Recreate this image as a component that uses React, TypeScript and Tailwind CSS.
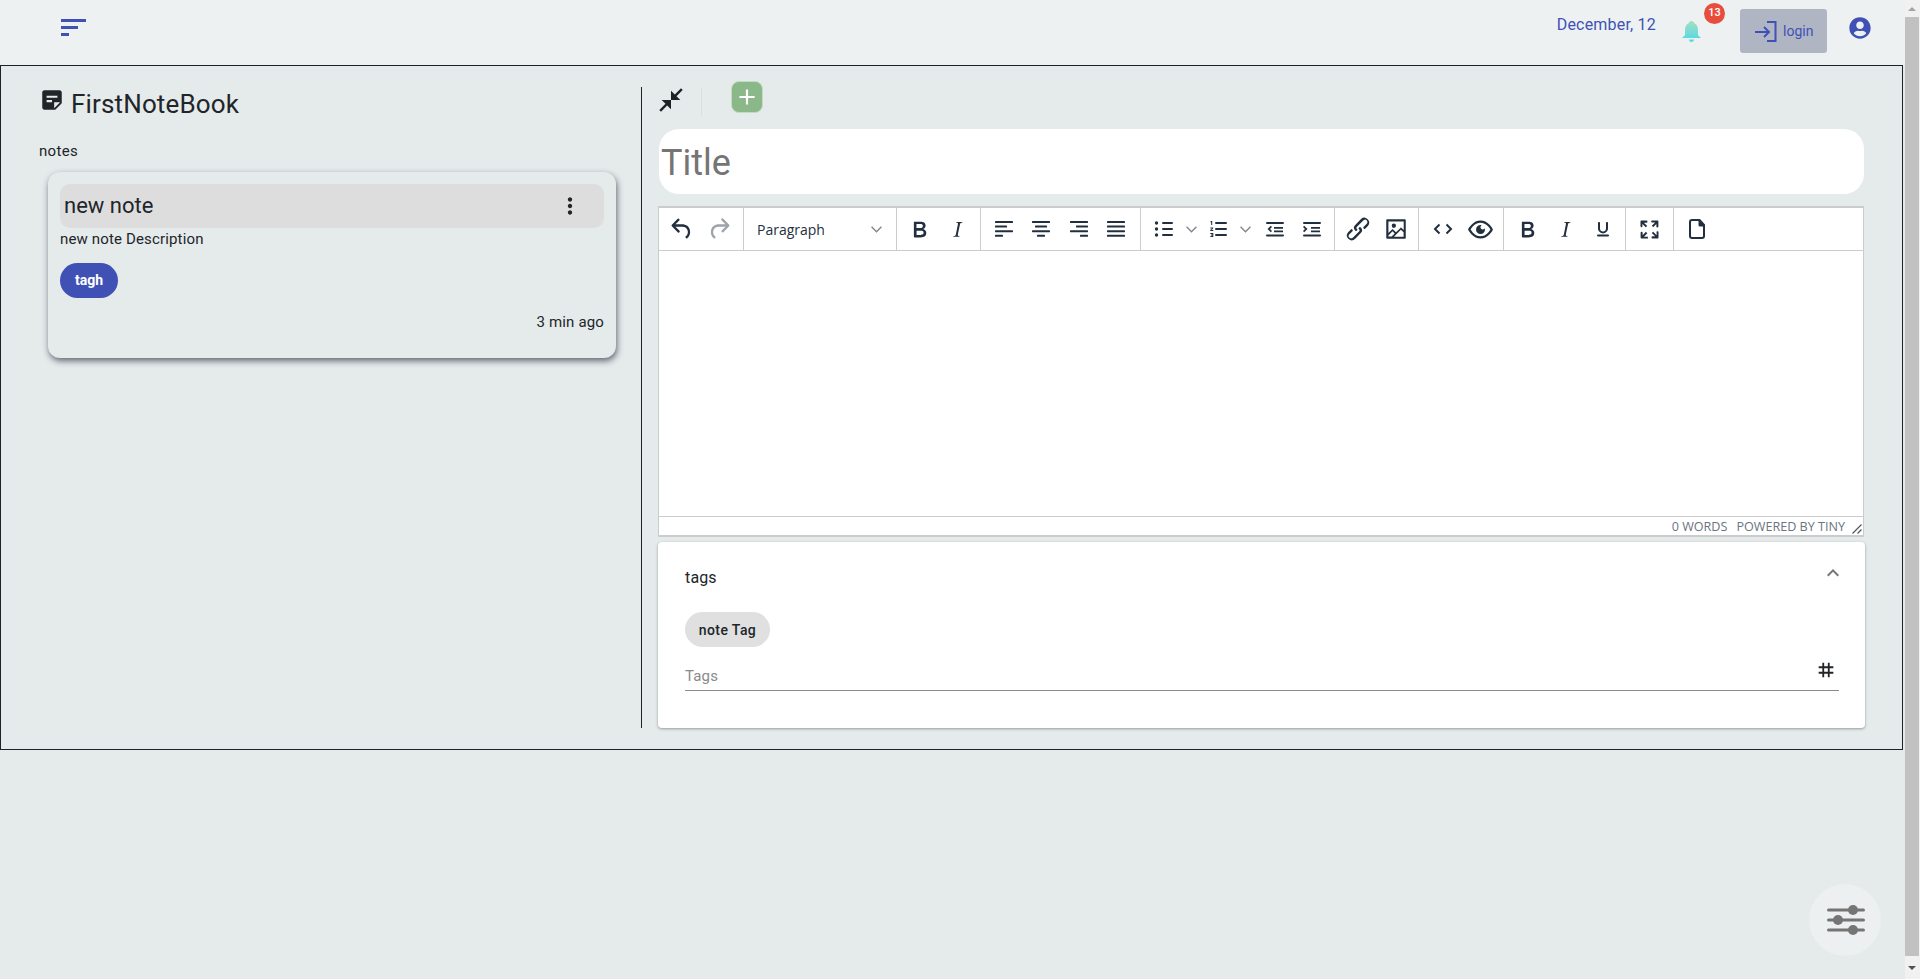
import React from "react";
import { MdStickyNote2, MdMoreVert, MdCloseFullscreen, MdTag, MdExpandLess, MdOutlineAdd } from "react-icons/md";
import { FaUserCircle } from "react-icons/fa";

const P = (d: string) => <path d={d} fillRule="nonzero" />;
const lines = (rows: [number, number][]) => (
  <>
    {rows.map(([x, w], i) => (
      <rect key={i} x={x} y={4 + i * 4.6} width={w} height="2" rx="0.6" />
    ))}
  </>
);

const icons = {
  undo: P("M6.4 8H12c3.7 0 6.2 2 6.8 5.1.6 2.7-.4 5.6-2.3 6.8a1 1 0 0 1-1-1.8c1.1-.6 1.8-2.7 1.4-4.6-.5-2.1-2.1-3.5-4.9-3.5H6.4l3.3 3.3a1 1 0 1 1-1.4 1.4l-5-5a1 1 0 0 1 0-1.4l5-5a1 1 0 0 1 1.4 1.4L6.4 8Z"),
  redo: P("M17.6 10H12c-2.8 0-4.4 1.4-4.9 3.5-.4 2 .3 4 1.4 4.6a1 1 0 1 1-1 1.8c-2-1.2-2.9-4.1-2.3-6.8.6-3 3-5.1 6.8-5.1h5.6l-3.3-3.3a1 1 0 1 1 1.4-1.4l5 5a1 1 0 0 1 0 1.4l-5 5a1 1 0 0 1-1.4-1.4l3.3-3.3Z"),
  bold: P("M7.8 19c-.3 0-.5 0-.6-.2l-.2-.5V5.7c0-.2 0-.4.2-.5l.6-.2h5c1.5 0 2.7.3 3.5 1 .7.6 1.1 1.4 1.1 2.5a3 3 0 0 1-.6 1.9c-.4.6-1 1-1.6 1.2.4.1.9.3 1.3.6s.8.7 1 1.2c.4.4.5 1 .5 1.6 0 1.3-.4 2.3-1.3 3-.8.7-2.1 1-3.8 1H7.8Zm5-8.3c.6 0 1.2-.1 1.6-.5.4-.3.6-.7.6-1.3 0-1.1-.8-1.7-2.3-1.7H9.3v3.5h3.4Zm.5 6c.7 0 1.3-.1 1.7-.4.4-.4.6-.9.6-1.5s-.2-1-.7-1.4c-.4-.3-1-.4-2-.4H9.4v3.8h4Z"),
  italic: P("m16.7 4.7-.1.9h-.3c-.6 0-1 0-1.4.3-.3.3-.4.6-.5 1.1l-2.1 9.8v.6c0 .5.4.8 1.4.8h.2l-.2.8H8l.2-.8h.2c1.1 0 1.8-.5 2-1.5l2-9.8.1-.5c0-.6-.4-.8-1.4-.8h-.3l.2-.9h5.800Z"),
  underline: P("M16 5c.6 0 1 .4 1 1v5.5a4 4 0 0 1-.4 1.8l-.5 1a5 5 0 0 1-8.2 0l-.5-1a4 4 0 0 1-.4-1.8V6c0-.6.4-1 1-1s1 .4 1 1v5.5c0 1.7 1.3 3 3 3s3-1.3 3-3V6c0-.6.4-1 1-1ZM7 17.5h10a1 1 0 0 1 0 2H7a1 1 0 0 1 0-2Z"),
  left: lines([[3, 18], [3, 12], [3, 18], [3, 8]]),
  center: lines([[3, 18], [6, 12], [3, 18], [8, 8]]),
  right: lines([[3, 18], [9, 12], [3, 18], [13, 8]]),
  justify: lines([[3, 18], [3, 18], [3, 18], [3, 18]]),
  bullet: (
    <>
      <path d="M11 5h9a1 1 0 0 1 0 2h-9a1 1 0 0 1 0-2Zm0 6h9a1 1 0 0 1 0 2h-9a1 1 0 0 1 0-2Zm0 6h9a1 1 0 0 1 0 2h-9a1 1 0 0 1 0-2Z" />
      <circle cx="4.500" cy="6" r="1.700" />
      <circle cx="4.500" cy="12" r="1.700" />
      <circle cx="4.500" cy="18" r="1.700" />
    </>
  ),
  number: (
    <>
      <path d="M10 5h10a1 1 0 0 1 0 2H10a1 1 0 0 1 0-2Zm0 6h10a1 1 0 0 1 0 2H10a1 1 0 0 1 0-2Zm0 6h10a1 1 0 0 1 0 2H10a1 1 0 0 1 0-2Z" />
      <path d="M5.2 4h1v4h-1V5.2H4.400V4.600ZM4.300 10.500h2.900v1.000L5.500 13h1.800v1H4.300v-1l1.800-1.600H4.300ZM4.300 16h3v4h-3v-.9h2v-.7H5v-.8h1.300v-.7h-2Z" />
    </>
  ),
  outdent: P("M7.800 8.700 4.500 12l3.300 3.300 1.200-1.200L7 12l2-2.100ZM11 10h9v1.800h-9Zm0 3.400h9v1.800h-9ZM4 5h16a1 1 0 0 1 0 2H4a1 1 0 1 1 0-2Zm0 12.500h16a1 1 0 0 1 0 2H4a1 1 0 0 1 0-2Z"),
  indent: P("m4.200 8.700 3.300 3.300-3.300 3.300L3 14.100 5 12 3 9.900ZM11 10h9v1.800h-9Zm0 3.400h9v1.800h-9ZM4 5h16a1 1 0 0 1 0 2H4a1 1 0 1 1 0-2Zm0 12.500h16a1 1 0 0 1 0 2H4a1 1 0 0 1 0-2Z"),
  link: P("M6.200 12.300a1 1 0 0 1 1.400 1.400l-2 2a2 2 0 1 0 2.600 2.800l4.800-4.800a1 1 0 0 0 0-1.400 1 1 0 1 1 1.400-1.300 2.900 2.900 0 0 1 0 4L9.600 20a3.900 3.900 0 0 1-5.500-5.500l2-2Zm11.600-.6a1 1 0 0 1-1.400-1.400l2-2a2 2 0 1 0-2.600-2.800L11 10.300a1 1 0 0 0 0 1.400A1 1 0 1 1 9.600 13a2.900 2.900 0 0 1 0-4L14.400 4a3.900 3.900 0 0 1 5.500 5.500l-2 2Z"),
  image: P("m5 15.700 3.300-3.200c.3-.3.7-.3 1 0L12 15l4.100-4c.3-.4.8-.4 1 0l2 1.900V5H5v10.700ZM5 18v1h3l2.800-2.900-2-2L5 17.900Zm14-3-2.500-2.400-6.400 6.500H19v-4ZM4 3h16c.6 0 1 .4 1 1v16c0 .6-.4 1-1 1H4a1 1 0 0 1-1-1V4c0-.6.4-1 1-1Zm6 8a2 2 0 1 0 0-4 2 2 0 0 0 0 4Z"),
  code: <path d="M8.500 7.500 4 12l4.500 4.500M15.500 7.500 20 12l-4.500 4.500" fill="none" stroke="#222f3e" strokeWidth="2" />,
  eye: P("M3.500 12.500c.5.800 1.100 1.600 1.800 2.300 2 2 4.200 3.200 6.700 3.200s4.700-1.200 6.700-3.200a16.200 16.200 0 0 0 2.100-2.800 15.700 15.700 0 0 0-2.100-2.800c-2-2-4.200-3.200-6.700-3.200a9.300 9.300 0 0 0-6.700 3.200A16.200 16.200 0 0 0 3.200 12c0 .2.200.3.300.5Zm-2.400-1 .7-1.200L4 7.800C6.200 5.400 8.900 4 12 4c3 0 5.800 1.400 8.100 3.800a18.200 18.200 0 0 1 2.800 3.700v1l-.7 1.200-2.100 2.500c-2.300 2.400-5 3.800-8.100 3.800-3 0-5.800-1.400-8.100-3.800a18.200 18.200 0 0 1-2.800-3.700 1 1 0 0 1 0-1Zm12-3.300a2 2 0 1 0 2.700 2.600 4 4 0 1 1-2.700-2.600Z"),
  full: P("m15.300 10-1.200-1.300 2.900-3h-2.300a.9.900 0 1 1 0-1.700H19c.5 0 .9.400.9.900v4.400a.9.900 0 1 1-1.800 0V7l-2.900 3Zm0 4 3 3v-2.300a.9.900 0 1 1 1.700 0V19c0 .5-.4.900-.9.900h-4.400a.9.900 0 1 1 0-1.800H17l-3-2.900 1.300-1.200ZM10 15.400l-2.900 3h2.300a.9.900 0 1 1 0 1.700H5a.9.900 0 0 1-.9-.9v-4.400a.9.900 0 1 1 1.800 0V17l2.900-3 1.200 1.300ZM8.700 10 5.700 7v2.300a.9.900 0 0 1-1.700 0V5c0-.5.400-.9.900-.9h4.400a.9.900 0 0 1 0 1.800H7l3 2.900L8.700 10Z"),
  doc: P("M7 4a1 1 0 0 0-1 1v14a1 1 0 0 0 1 1h10a1 1 0 0 0 1-1V9.500h-3a1.500 1.500 0 0 1-1.500-1.500V4H7ZM7 2h8l5 5.500V19a3 3 0 0 1-3 3H7a3 3 0 0 1-3-3V5a3 3 0 0 1 3-3Z"),
};

const Btn = ({ i, muted, w = "w-[37.500px]", size = 24 }: { i: keyof typeof icons; muted?: boolean; w?: string; size?: number }) => (
  <div className={`${w} flex items-center justify-center shrink-0`}>
    <svg viewBox="0 0 24 24" width={size} height={size} className="shrink-0" fill={muted ? "#9ea3a9" : "#222f3e"}>
      {icons[i]}
    </svg>
  </div>
);

const Chev = () => (
  <svg viewBox="0 0 10 6" width="11" height="7" fill="none" stroke="#7e858c" strokeWidth="1.200" className="shrink-0">
    <path d="M0.500 0.500 5 5l4.500-4.500" />
  </svg>
);

const Group = ({ children, w }: { children: React.ReactNode; w: string }) => (
  <div className={`${w} h-full flex items-center border-r border-[#cccccc] shrink-0`}>{children}</div>
);

function Toolbar() {
  return (
    <div className="h-[43px] flex items-center border-b border-[#cccccc] shrink-0">
      <Group w="w-[85px] pl-[4px]">
        <Btn i="undo" size={28} />
        <Btn i="redo" muted size={28} />
      </Group>
      <div className="w-[153px] h-full border-r border-[#cccccc] flex items-center justify-between pl-[13px] pr-[14px] shrink-0">
        <span className="text-[14px] text-[#222f3e] font-['Open_Sans',sans-serif] mt-[1px]">Paragraph</span>
        <Chev />
      </div>
      <Group w="w-[84px] pl-[4px]">
        <Btn i="bold" size={27} />
        <Btn i="italic" size={25} />
      </Group>
      <Group w="w-[160px] pl-[4px]">
        <Btn i="left" />
        <Btn i="center" />
        <Btn i="right" />
        <Btn i="justify" />
      </Group>
      <div className="w-[194px] h-full border-r border-[#cccccc] flex items-center pl-[11px] shrink-0">
        <Btn i="bullet" w="w-[24px]" />
        <div className="w-[21px] ml-[5px] mr-[4px] flex justify-center shrink-0"><Chev /></div>
        <Btn i="number" w="w-[24px]" />
        <div className="w-[21px] ml-[5px] mr-[7px] flex justify-center shrink-0"><Chev /></div>
        <Btn i="outdent" w="w-[24px]" />
        <Btn i="indent" w="w-[50px]" />
      </div>
      <Group w="w-[84px] pl-[4px]">
        <Btn i="link" size={30} />
        <Btn i="image" w="w-[39.500px]" size={26} />
      </Group>
      <Group w="w-[85px] pl-[5px]">
        <Btn i="code" />
        <Btn i="eye" size={27} />
      </Group>
      <Group w="w-[122px] pl-[5px]">
        <Btn i="bold" size={27} />
        <Btn i="italic" size={25} />
        <Btn i="underline" />
      </Group>
      <Group w="w-[48px] pl-[5px]">
        <Btn i="full" size={27} />
      </Group>
      <div className="flex-1 h-full flex items-center pl-[4px]">
        <Btn i="doc" />
      </div>
    </div>
  );
}

function Editor() {
  return (
    <div className="mt-[12px] h-[331px] mr-[1px] border-x border-t-2 border-b-2 border-[#cccccc] bg-white flex flex-col">
      <Toolbar />
      <div className="flex-1" />
      <div className="h-[19px] border-t border-[#cccccc] flex items-center justify-end text-[12.600px] leading-[19px] text-[#6a7480] font-['Open_Sans',sans-serif] pr-[18px] pt-[1px] relative">
        <span>0 WORDS</span>
        <span className="ml-[9px]">POWERED BY TINY</span>
        <svg viewBox="0 0 10 10" width="10" height="10" className="absolute right-[1px] bottom-[1px]" stroke="#4d5763" strokeWidth="1.200" fill="none">
          <path d="M0.500 9.500 9.500 0.500M5.500 9.500l4-4" />
        </svg>
      </div>
    </div>
  );
}

function NoteCard() {
  return (
    <div className="ml-[47px] mt-[11px] w-[568px] h-[186px] rounded-[12px] p-[12px] shadow-[1px_3px_6px_rgba(30,35,55,0.65)]">
      <div className="h-[44px] bg-[#dedddd] rounded-[10px] flex items-center justify-between pl-[4px] pr-[22px]">
        <span className="text-[22px] text-[#212529] -mt-[1px]">new note</span>
        <MdMoreVert size={26} color="#212529" className="-mr-[1px]" />
      </div>
      <p className="mt-[1px] text-[15px] leading-[20px] tracking-[0.15px] text-[#212529]">new note Description</p>
      <div className="mt-[14px] w-[58px] h-[35px] rounded-[18px] bg-[#3f51b5] flex items-center justify-center text-[14px] font-bold text-white">tagh</div>
      <p className="mt-[14px] text-right text-[15px] leading-[20px] tracking-[0.15px] text-[#212529]">3 min ago</p>
    </div>
  );
}

function Header() {
  return (
    <header className="h-[65px] bg-[#edf1f2] flex items-start shrink-0 relative">
      <svg viewBox="0 0 25 17" width="25" height="17" className="ml-[61px] mt-[19px]" fill="#3f51b5">
        <rect x="0" y="0" width="25" height="3" />
        <rect x="0" y="7" width="17" height="3" />
        <rect x="0" y="14" width="8" height="3" />
      </svg>
      <div className="ml-auto flex items-start pr-[34px]">
        <span className="mt-[14px] text-[16px] leading-[22px] text-[#3f51b5] tracking-[0.2px]">December, 12</span>
        <div className="relative ml-[26px] mt-[21px] w-[19px] h-[21px]">
          <svg viewBox="0 0 19 21" width="19" height="21">
            <defs>
              <linearGradient id="bell" x1="0" y1="0" x2="0" y2="1">
                <stop offset="0" stopColor="#a3dfc2" />
                <stop offset="1" stopColor="#4ed8e6" />
              </linearGradient>
            </defs>
            <path d="M9.500 0C11 0 12 1 12.300 2.200 15 3.300 16 6 16 9v5l3 3H0l3-3V9c0-3 1-5.700 3.700-6.800C7 1 8 0 9.500 0ZM7 18.500h5C12 20 11 21 9.500 21S7 20 7 18.500Z" fill="url(#bell)" />
          </svg>
          <span className="absolute left-[22px] -top-[18px] w-[21px] h-[21px] rounded-full bg-[#e74c3c] text-white text-[11px] font-medium flex items-center justify-center">13</span>
        </div>
        <div className="ml-[39px] mt-[9px] w-[87px] h-[44px] rounded-[3px] bg-[#b0b5c3] flex items-center pl-[15px]">
          <svg viewBox="0 0 22 21" width="22" height="21" fill="none" stroke="#3f51b5" strokeWidth="2" className="shrink-0">
            <path d="M0 11h13M9 6l5 5-5 5M12 1h8.500v19H12" />
          </svg>
          <span className="ml-[6px] text-[14px] text-[#3f51b5]">login</span>
        </div>
        <FaUserCircle size={22} color="#3f51b5" className="ml-[22px] mt-[17px]" />
      </div>
    </header>
  );
}

function Scrollbar() {
  return (
    <div className="w-[15px] h-full bg-[#f1f1f1] flex flex-col items-center pr-[1px] shrink-0">
      <div className="h-[17px] flex items-center justify-center">
        <div className="w-0 h-0 border-x-[4px] border-x-transparent border-b-[4px] border-b-[#a3a3a3]" />
      </div>
      <div className="flex-1 w-full bg-[#c1c1c1]" />
      <div className="h-[23px] flex items-center justify-center">
        <div className="w-0 h-0 border-x-[4px] border-x-transparent border-t-[4px] border-t-[#505050]" />
      </div>
    </div>
  );
}

export default function App() {
  return (
    <div className="relative h-[979px] w-full flex overflow-hidden bg-[#e5eaeb] font-['Roboto',sans-serif]">
      <div className="flex-1 min-w-0 flex flex-col">
        <Header />
        <main className="h-[685px] mr-[2px] border border-[#1c2326] flex shrink-0">
          <section className="w-[641px] mt-[21px] mb-[21px] border-r border-[#1c2326] shrink-0">
            <div className="flex items-start pl-[40px]">
              <MdStickyNote2 size={26} color="#212529" className="-ml-[2px]" />
              <h1 className="ml-[6px] text-[26px] leading-[34px] tracking-[0.15px] text-[#212529]">FirstNoteBook</h1>
            </div>
            <p className="mt-[20px] pl-[38px] text-[15px] leading-[20px] tracking-[0.3px] text-[#212529]">notes</p>
            <NoteCard />
          </section>
          <section className="flex-1 pl-[16px] pr-[37px] pt-[15px] min-w-0">
            <div className="h-[31px] flex items-start">
              <MdCloseFullscreen size={28} color="#1c2326" className="mt-[5px] -ml-[1px]" />
              <div className="ml-[16px] mt-[7px] w-px h-[28px] bg-[#d9dee0]" />
              <div className="ml-[29px] w-[32px] h-[32px] rounded-[8px] bg-[#8bb888] border border-[#c3dcc2] flex items-center justify-center">
                <MdOutlineAdd size={26} color="#ffffff" />
              </div>
            </div>
            <div className="mt-[17px] h-[65px] ml-[1px] mr-[1px] rounded-[20px] bg-white flex items-center pl-[2px] pt-[2px] text-[36px] text-[#757575]">Title</div>
            <Editor />
            <div className="mt-[5px] h-[186px] rounded-[4px] bg-white shadow-[0_1px_3px_rgba(0,0,0,0.35)] pl-[27px] pr-[26px] relative">
              <div className="h-[70px] flex items-start justify-between">
                <span className="mt-[25px] text-[16px] leading-[22px] tracking-[0.15px] text-[#212529]">tags</span>
                <MdExpandLess size={24} color="#757575" className="mt-[19px] -mr-[6px]" />
              </div>
              <div className="w-[85px] h-[35px] rounded-[18px] bg-[#e0e0e0] flex items-center justify-center pt-[2px] text-[14px] tracking-[0.4px] font-medium text-[#212529]">note Tag</div>
              <div className="mt-[15px] h-[29px] border-b border-[#8c8c8c] flex items-start justify-between">
                <span className="text-[15px] leading-[28px] tracking-[0.15px] text-[#8a8a8a]">Tags</span>
                <MdTag size={22} color="#212529" className="-mt-[3px] mr-[2px]" />
              </div>
            </div>
          </section>
        </main>
      </div>
      <Scrollbar />
      <div className="absolute left-[1809px] top-[884px] w-[72px] h-[72px] rounded-full bg-[#ecf0f1] flex items-center justify-center">
        <svg viewBox="0 0 38 30" width="38" height="30" fill="#757575" className="ml-[1px]">
          <rect x="0" y="3.500" width="38" height="3" rx="1.500" />
          <rect x="0" y="13.500" width="38" height="3" rx="1.500" />
          <rect x="0" y="23.500" width="38" height="3" rx="1.500" />
          <circle cx="26" cy="5" r="5" />
          <circle cx="11" cy="15" r="5" />
          <circle cx="26" cy="25" r="5" />
        </svg>
      </div>
    </div>
  );
}
